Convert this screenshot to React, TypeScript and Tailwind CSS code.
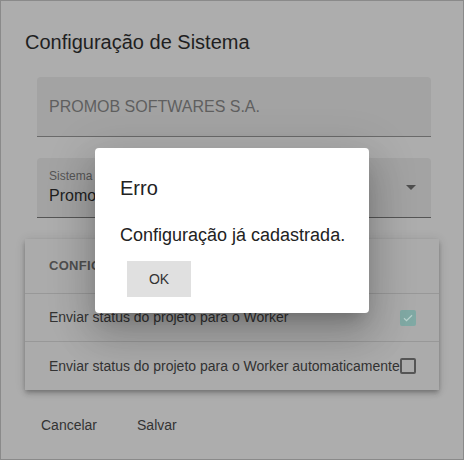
import React from "react";

export default function App() {
  return (
    <div className="relative w-[464px] h-[460px] overflow-hidden border border-[#8a8a8a] bg-[#adadad] font-['Liberation_Sans',Arial,sans-serif]">
      <div className="pt-[25px]">
        <h2 className="ml-[24px] text-[20px] leading-[32px] text-[#1f1f1f]">Configuração de Sistema</h2>

        <div className="ml-[36px] mt-[19px] w-[394px] h-[60px] rounded-t-[4px] bg-[#a3a3a3] border-b border-[#6a6a6a] flex items-center px-[12px]">
          <span className="text-[16px] text-[#5f5f5f] pt-[1px]">PROMOB SOFTWARES S.A.</span>
        </div>

        <div className="ml-[36px] mt-[21px] w-[394px] h-[60px] rounded-t-[4px] bg-[#a3a3a3] border-b border-[#555] flex items-center pl-[12px] pr-[8px]">
          <div className="flex-1 flex flex-col pt-[1px]">
            <span className="text-[12px] leading-[14px] text-[#555]">Sistema</span>
            <span className="text-[16px] leading-[24px] text-[#1f1f1f] mt-[1px]">Promob</span>
          </div>
          <svg width="24" height="24" viewBox="0 0 24 24" className="mb-[1px]">
            <path d="M7 10l5 5 5-5z" fill="#4f4f4f" />
          </svg>
        </div>

        <div className="ml-[24px] mt-[21px] w-[414px] bg-[#ababab] shadow-[0_2px_4px_-1px_rgba(0,0,0,0.2),0_4px_5px_0_rgba(0,0,0,0.14),0_1px_10px_0_rgba(0,0,0,0.12)]">
          <div className="h-[55px] flex items-center px-[24px] border-b border-[#989898]">
            <span className="text-[13px] font-bold tracking-[0.3px] text-[#4f4f4f]">CONFIGURAÇÕES</span>
          </div>
          <div className="h-[48px] flex items-center pl-[24px] pr-[23px] border-b border-[#989898]">
            <span className="flex-1 text-[14px] text-[#333]">Enviar status do projeto para o Worker</span>
            <div className="w-[16px] h-[16px] rounded-[2px] bg-[#80a9a4] flex items-center justify-center">
              <svg width="12" height="12" viewBox="0 0 24 24">
                <path d="M4 12.5l5 5L20 6.5" fill="none" stroke="#b9d2ce" strokeWidth="2.4" />
              </svg>
            </div>
          </div>
          <div className="h-[48px] flex items-center pl-[24px] pr-[23px]">
            <span className="flex-1 text-[14px] text-[#333] whitespace-nowrap">Enviar status do projeto para o Worker automaticamente</span>
            <div className="w-[16px] h-[16px] rounded-[2px] border-2 border-[#555]" />
          </div>
        </div>

        <div className="mt-[17px] flex items-center h-[36px] pl-[40px] gap-[40px] text-[14px] text-[#333]">
          <span>Cancelar</span>
          <span>Salvar</span>
        </div>
      </div>

      <div className="absolute left-[94px] top-[147px] w-[274px] h-[165px] bg-white rounded-[4px] shadow-[0_11px_15px_-7px_rgba(0,0,0,0.2),0_24px_38px_3px_rgba(0,0,0,0.14),0_9px_46px_8px_rgba(0,0,0,0.12)] pl-[25px] pt-[24px]">
        <div className="text-[20px] leading-[32px] text-[#222]">Erro</div>
        <div className="mt-[19px] text-[18px] leading-[24px] text-[#222] whitespace-nowrap">Configuração já cadastrada.</div>
        <div className="mt-[14px] ml-[7px] w-[64px] h-[36px] bg-[#e0e0e0] flex items-center justify-center text-[14px] text-[#333]">OK</div>
      </div>
    </div>
  );
}
